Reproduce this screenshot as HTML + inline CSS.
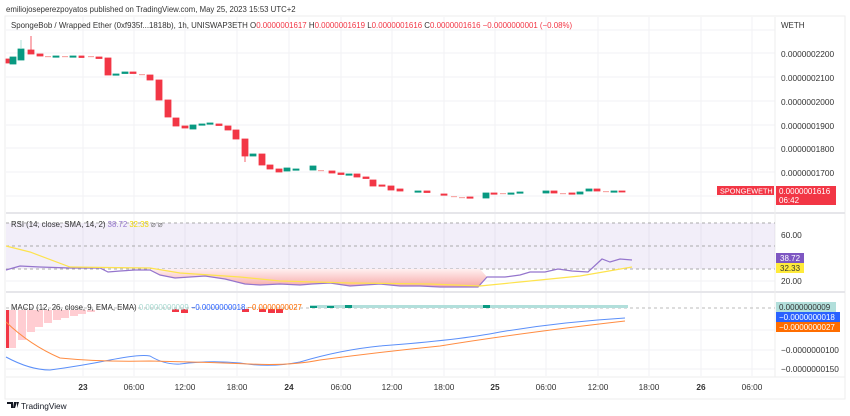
<!DOCTYPE html>
<html><head><meta charset="utf-8"><style>
body{margin:0;width:850px;height:416px;background:#fff;overflow:hidden;font-family:"Liberation Sans",sans-serif}
svg{position:absolute;left:0;top:0}
</style></head><body>
<svg width="850" height="416" font-family="Liberation Sans, sans-serif">
<text x="6" y="12" font-size="7.8" fill="#333">emiliojoseperezpoyatos published on TradingView.com, May 25, 2023 15:53 UTC+2</text>
<rect x="5" y="16" width="840" height="383" fill="none" stroke="#eee"/>
<g stroke="#f2f2f4">
<line x1="83" y1="17" x2="83" y2="376"/><line x1="134" y1="17" x2="134" y2="376"/><line x1="185" y1="17" x2="185" y2="376"/><line x1="237" y1="17" x2="237" y2="376"/><line x1="289" y1="17" x2="289" y2="376"/><line x1="341" y1="17" x2="341" y2="376"/><line x1="392" y1="17" x2="392" y2="376"/><line x1="444" y1="17" x2="444" y2="376"/><line x1="495" y1="17" x2="495" y2="376"/><line x1="546" y1="17" x2="546" y2="376"/><line x1="598" y1="17" x2="598" y2="376"/><line x1="649" y1="17" x2="649" y2="376"/><line x1="701" y1="17" x2="701" y2="376"/><line x1="752" y1="17" x2="752" y2="376"/>
<line x1="6" y1="30" x2="775" y2="30"/><line x1="6" y1="53" x2="775" y2="53"/><line x1="6" y1="77" x2="775" y2="77"/><line x1="6" y1="101" x2="775" y2="101"/><line x1="6" y1="125" x2="775" y2="125"/><line x1="6" y1="148" x2="775" y2="148"/><line x1="6" y1="172" x2="775" y2="172"/><line x1="6" y1="196" x2="775" y2="196"/>
<line x1="6" y1="281" x2="775" y2="281"/><line x1="6" y1="330" x2="775" y2="330"/><line x1="6" y1="350" x2="775" y2="350"/><line x1="6" y1="369" x2="775" y2="369"/>
</g>
<line x1="6" y1="213" x2="845" y2="213" stroke="#e6e6ea" stroke-width="2"/>
<line x1="6" y1="292" x2="845" y2="292" stroke="#e6e6ea" stroke-width="2"/>
<line x1="6" y1="377" x2="845" y2="377" stroke="#eee"/>
<line x1="775" y1="17" x2="775" y2="377" stroke="#eee"/>
<text x="11" y="28" font-size="7.9" fill="#333">SpongeBob / Wrapped Ether (0xf935f...1818b), 1h, UNISWAP3ETH  O<tspan fill="#f23645">0.0000001617</tspan>  H<tspan fill="#f23645">0.0000001619</tspan>  L<tspan fill="#f23645">0.0000001616</tspan>  C<tspan fill="#f23645">0.0000001616  −0.0000000001 (−0.08%)</tspan></text>
<text x="781" y="28" font-size="8" fill="#333">WETH</text>
<g font-size="8.3" fill="#333">
<text x="781" y="57">0.0000002200</text><text x="781" y="81">0.0000002100</text><text x="781" y="105">0.0000002000</text><text x="781" y="129">0.0000001900</text><text x="781" y="152">0.0000001800</text><text x="781" y="176">0.0000001700</text>
</g>
<g fill="#f23645" stroke="#f23645" stroke-width="0.8">
<rect x="6" y="59" width="5" height="4"/><rect x="28" y="50" width="6" height="4"/><line x1="31" y1="36" x2="31" y2="50"/><rect x="37" y="54" width="6" height="2"/><rect x="79" y="56" width="5" height="1.5"/><rect x="96" y="57" width="6" height="1.5"/>
<rect x="105" y="58" width="6" height="17"/><rect x="130" y="72" width="6" height="1.5"/><rect x="147" y="75" width="6" height="5"/><rect x="156" y="80" width="6" height="20"/><rect x="165" y="100" width="6" height="17"/><rect x="173" y="118" width="6" height="8"/><rect x="182" y="126" width="6" height="2"/><rect x="216" y="124" width="6" height="1.5"/><rect x="225" y="126" width="6" height="4"/><rect x="233" y="130" width="6" height="9"/><rect x="242" y="139" width="6" height="17"/><line x1="245" y1="156" x2="245" y2="162"/><rect x="259" y="154" width="6" height="11"/><rect x="267" y="165" width="6" height="4"/><rect x="276" y="169" width="6" height="3"/>
<rect x="329" y="171" width="6" height="2"/><rect x="338" y="173" width="6" height="1.5"/><rect x="354" y="174" width="6" height="3"/><rect x="363" y="177" width="6" height="1.5"/><rect x="370" y="180" width="6" height="6"/><rect x="379" y="185" width="6" height="1.2"/><rect x="388" y="186" width="6" height="4"/><rect x="397" y="189" width="6" height="2"/><rect x="424" y="191" width="6" height="1.5"/><rect x="441" y="194" width="6" height="1.2"/><rect x="467" y="197" width="6" height="1.2"/><rect x="491" y="193" width="6" height="1.2"/><rect x="551" y="191" width="6" height="2"/><rect x="569" y="193" width="6" height="1.2"/><rect x="594" y="189" width="6" height="2"/><rect x="619" y="191" width="6" height="1"/>
</g>
<g fill="#f7a9a7"><rect x="45" y="56" width="6" height="1.2"/><rect x="62" y="56" width="6" height="1.2"/><rect x="88" y="56" width="6" height="1.2"/><rect x="139" y="74" width="6" height="1.2"/><rect x="451" y="196" width="6" height="1.2"/><rect x="459" y="197" width="6" height="1.2"/><rect x="500" y="193" width="6" height="1.2"/><rect x="560" y="193" width="6" height="1.2"/><rect x="603" y="191" width="6" height="1.2"/><rect x="318" y="170" width="6" height="1.2"/></g>
<g fill="#089981" stroke="#089981" stroke-width="0.8">
<rect x="10" y="57" width="6" height="7"/><rect x="18" y="49" width="6" height="11"/><line x1="21" y1="40" x2="21" y2="49" stroke="#9fd8cd"/><rect x="53" y="56" width="6" height="1.2"/><rect x="70" y="56" width="6" height="1.2"/><rect x="113" y="74" width="6" height="1.2"/><rect x="122" y="72" width="6" height="1.5"/><rect x="190" y="125" width="6" height="4"/><rect x="199" y="124" width="6" height="1.2"/><rect x="207" y="123" width="6" height="1.2"/><rect x="250" y="154" width="6" height="2"/><rect x="284" y="168" width="6" height="3"/><rect x="293" y="169" width="6" height="1.2"/><rect x="310" y="166" width="6" height="4"/><rect x="346" y="174" width="6" height="1.2"/><rect x="415" y="191" width="6" height="1.2"/><rect x="483" y="193" width="6" height="5"/><rect x="508" y="193" width="6" height="1.2"/><rect x="517" y="192" width="6" height="1.2"/><rect x="543" y="191" width="6" height="2"/><rect x="577" y="192" width="6" height="2"/><rect x="586" y="189" width="6" height="2"/><rect x="611" y="191" width="6" height="1.2"/></g>
<rect x="717" y="186" width="57" height="9" fill="#f23645"/><text x="720" y="193.5" font-size="7.3" fill="#fff">SPONGEWETH</text>
<rect x="776" y="186" width="60" height="19" fill="#f23645"/><text x="779" y="194" font-size="8" fill="#fff">0.0000001616</text><text x="779" y="203" font-size="8" fill="#fff">06:42</text>
<rect x="6" y="223" width="769" height="46" fill="#7e57c2" fill-opacity="0.1"/>
<g stroke="#aaa" stroke-dasharray="3,3"><line x1="6" y1="223" x2="775" y2="223"/><line x1="6" y1="246" x2="775" y2="246"/><line x1="6" y1="269" x2="775" y2="269"/></g>
<defs><linearGradient id="g" x1="0" y1="0" x2="0" y2="1"><stop offset="0" stop-color="#fff0f0"/><stop offset="1" stop-color="#f7a9a7"/></linearGradient></defs>
<path d="M150 269 L160 275 L175 278 L190 277 L205 276 L225 279 L245 284 L260 285 L280 284 L300 285 L312 284 L330 283 L350 286 L365 285 L380 284 L400 286 L420 286 L440 287 L478 287 L487 277 L480 269 Z" fill="url(#g)"/>
<path d="M6 270 L20 266 L40 267 L70 268 L100 268 L108 272 L120 271 L135 270 L150 270 L160 275 L175 278 L190 277 L205 276 L225 279 L245 284 L260 285 L280 284 L300 285 L312 284 L330 283 L350 286 L365 285 L380 284 L400 286 L420 286 L440 287 L478 287 L487 277 L505 277 L520 275 L530 272 L545 272 L558 269 L572 271 L588 272 L602 259 L610 262 L620 259 L632 260" fill="none" stroke="#9575cd" stroke-width="1.2"/>
<path d="M6 246 L30 252 L70 267 L150 268 L180 273 L240 277 L280 281 L350 283 L430 284 L480 286 L520 282 L580 276 L632 267" fill="none" stroke="#fde34e" stroke-width="1.2"/>
<text x="11" y="227" font-size="7.8" fill="#333">RSI (14, close, SMA, 14, 2) <tspan fill="#9575cd">38.72</tspan> <tspan fill="#f0d800">32.33</tspan> <tspan fill="#777">⌀ ⌀</tspan></text>
<text x="781" y="238" font-size="8.3" fill="#333">60.00</text><text x="781" y="284" font-size="8.3" fill="#333">20.00</text>
<rect x="776" y="253" width="28" height="10" fill="#7e57c2"/><text x="780" y="261" font-size="8" fill="#fff">38.72</text>
<rect x="776" y="263" width="28" height="10" fill="#ffeb3b"/><text x="780" y="271" font-size="8" fill="#333">32.33</text>
<line x1="6" y1="308" x2="775" y2="308" stroke="#bbb" stroke-dasharray="3,3"/>
<g fill="#ffcdd2"><rect x="8" y="310" width="8" height="38"/><rect x="18" y="310" width="8" height="30"/><rect x="27" y="310" width="8" height="22"/><rect x="35" y="310" width="8" height="17"/><rect x="44" y="310" width="8" height="13"/><rect x="53" y="310" width="8" height="10"/><rect x="61" y="310" width="8" height="8"/><rect x="70" y="310" width="8" height="6"/><rect x="78" y="310" width="8" height="4"/><rect x="87" y="310" width="8" height="2"/></g>
<rect x="6" y="310" width="3" height="38" fill="#f23645"/>
<g fill="#f23645"><rect x="172" y="309" width="7" height="3"/><rect x="181" y="309" width="7" height="4"/><rect x="242" y="309" width="7" height="3"/><rect x="259" y="309" width="7" height="3"/><rect x="268" y="309" width="7" height="4"/><rect x="276" y="309" width="7" height="4"/></g>
<rect x="310" y="305" width="318" height="3" fill="#b2dfdb"/>
<g fill="#089981"><rect x="310" y="306" width="7" height="2"/><rect x="327" y="306" width="7" height="2"/><rect x="345" y="305" width="7" height="3"/><rect x="483" y="305" width="7" height="3"/></g>
<path d="M6 357 Q30 370 50 370 Q80 366 110 360 Q140 354 150 356 Q165 365 180 364 Q210 360 240 363 Q270 368 300 362 Q340 350 380 346 Q460 340 500 332 Q560 322 625 318" fill="none" stroke="#5b8ff9" stroke-width="1"/>
<path d="M6 322 Q30 345 60 358 Q100 362 150 361 Q200 362 250 364 Q290 366 320 360 Q380 352 440 346 Q520 333 625 321" fill="none" stroke="#ff8c42" stroke-width="1"/>
<text x="11" y="310" font-size="7.8" fill="#333">MACD (12, 26, close, 9, EMA, EMA) <tspan fill="#a6d8cf">0.0000000009</tspan>  <tspan fill="#2962ff">−0.0000000018</tspan>  <tspan fill="#ff6d00">−0.0000000027</tspan></text>
<rect x="776" y="302" width="60" height="10" fill="#b2dfdb"/><text x="779" y="310" font-size="8" fill="#333">0.0000000009</text>
<rect x="776" y="312" width="64" height="10" fill="#2962ff"/><text x="779" y="320" font-size="8" fill="#fff">−0.0000000018</text>
<rect x="776" y="322" width="64" height="10" fill="#ff6d00"/><text x="779" y="330" font-size="8" fill="#fff">−0.0000000027</text>
<text x="781" y="353" font-size="8.3" fill="#333">−0.0000000100</text><text x="781" y="372" font-size="8.3" fill="#333">−0.0000000150</text>
<g font-size="8.3" fill="#333" text-anchor="middle"><text x="83" y="390" font-weight="bold">23</text><text x="134" y="390">06:00</text><text x="185" y="390">12:00</text><text x="237" y="390">18:00</text><text x="289" y="390" font-weight="bold">24</text><text x="341" y="390">06:00</text><text x="392" y="390">12:00</text><text x="444" y="390">18:00</text><text x="495" y="390" font-weight="bold">25</text><text x="546" y="390">06:00</text><text x="598" y="390">12:00</text><text x="649" y="390">18:00</text><text x="701" y="390" font-weight="bold">26</text><text x="752" y="390">06:00</text></g>
<path d="M7 402 h6 v6 h-2 v-4 h-4z M14 402 h3 l-2 6 h-2z M17 402 h2 l-2 6z" fill="#131722"/>
<text x="21" y="409" font-size="8.3" fill="#131722">TradingView</text>
</svg>
</body></html>
